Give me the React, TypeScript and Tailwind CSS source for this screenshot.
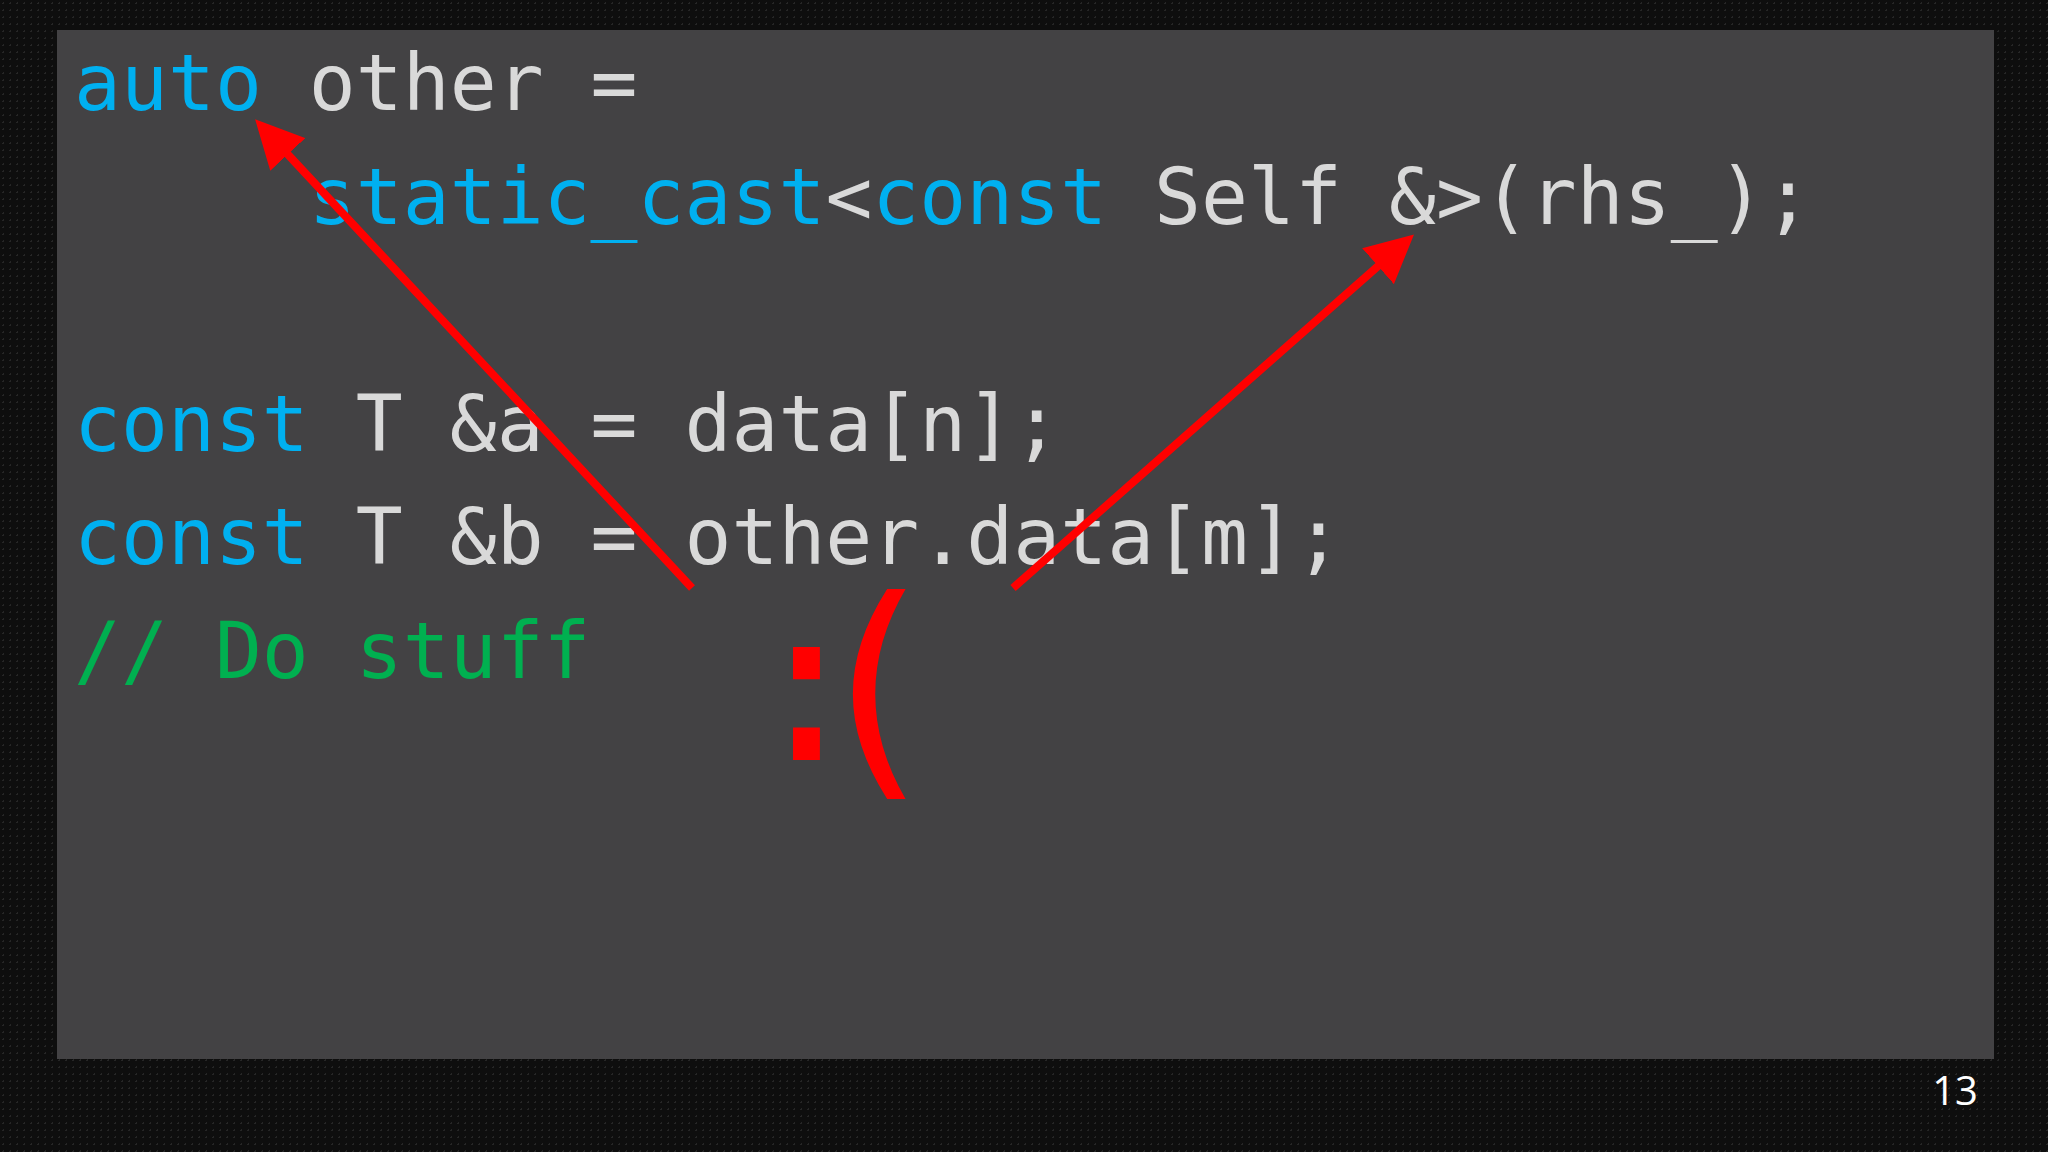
const mono = "font-['DejaVu_Sans_Mono','Liberation_Mono',monospace]";

const Kw = ({ children }: { children: React.ReactNode }) => (
  <span className="text-[#00b0f0]">{children}</span>
);

const Arrows = () => (
  <svg className="absolute left-0 top-0 pointer-events-none" width="2048" height="1152" viewBox="0 0 2048 1152">
    <defs>
      <marker id="head" markerWidth="6" markerHeight="6" refX="4" refY="3" orient="auto" markerUnits="strokeWidth">
        <path d="M0,0 L6,3 L0,6 Z" fill="#ff0000" />
      </marker>
    </defs>
    <line x1="692" y1="588" x2="266" y2="131" stroke="#ff0000" strokeWidth="8" markerEnd="url(#head)" />
    <line x1="1013" y1="588" x2="1402" y2="245" stroke="#ff0000" strokeWidth="8" markerEnd="url(#head)" />
  </svg>
);

export default function App() {
  return (
    <div className="relative w-[2048px] h-[1152px] overflow-hidden bg-[#0e0e0e] bg-[radial-gradient(#262626_1px,transparent_1px)] bg-[size:7px_7px]">
      <div className="flex flex-col pt-[30px] pl-[57px]">
        <div className="w-[1937px] h-[1029px] bg-[#434244]">
          <pre className={`${mono} text-[78px] leading-[113.6px] text-[#d9d9d9] pl-[17px] -mt-[3px] whitespace-pre`}>
            <div><Kw>auto</Kw> other =</div>
            <div>     <Kw>static_cast</Kw>&lt;<Kw>const</Kw> Self &amp;&gt;(rhs_);</div>
            <div>&nbsp;</div>
            <div><Kw>const</Kw> T &amp;a = data[n];</div>
            <div><Kw>const</Kw> T &amp;b = other.data[m];</div>
            <div className="text-[#00b050]">// Do stuff</div>
          </pre>
        </div>
        <div className="flex justify-end pr-[70px] pt-[11px]">
          <span className="font-['Open_Sans',sans-serif] text-[40px] text-white leading-none">13</span>
        </div>
      </div>
      <Arrows />
      <span className={`absolute left-[741px] top-[576px] ${mono} text-[218px] leading-none text-[#ff0000]`}>:</span>
      <span className={`absolute left-[804px] top-[569px] ${mono} text-[235px] leading-none text-[#ff0000]`}>(</span>
    </div>
  );
}
